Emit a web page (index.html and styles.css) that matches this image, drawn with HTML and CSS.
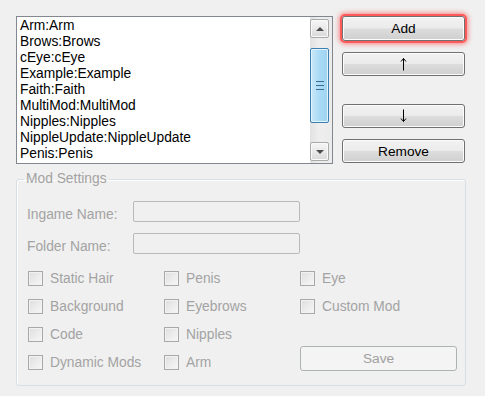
FILE: index.html
```html
<!DOCTYPE html>
<html lang="en">
<head>
  <meta charset="UTF-8" />
  <title>Mod Manager</title>
  <link rel="stylesheet" href="styles.css">
</head>
<body>

<div class="window">
  <div class="top">
    <div class="listbox">
      <ul class="items">
        <li>Arm:Arm</li>
        <li>Brows:Brows</li>
        <li>cEye:cEye</li>
        <li>Example:Example</li>
        <li>Faith:Faith</li>
        <li>MultiMod:MultiMod</li>
        <li>Nipples:Nipples</li>
        <li>NippleUpdate:NippleUpdate</li>
        <li>Penis:Penis</li>
      </ul>
      <div class="scrollbar">
        <div class="sb-btn"><span class="tri up"></span></div>
        <div class="sb-track">
          <div class="thumb"><span class="grip"></span></div>
        </div>
        <div class="sb-btn"><span class="tri down"></span></div>
      </div>
    </div>

    <div class="actions">
      <button class="btn focused">Add</button>
      <button class="btn arrow" title="Move up">
        <svg width="7" height="14" viewBox="0 0 7 14"><path d="M3.5 1.5V13.5M1 4.5L3.5 1.5L6 4.5" fill="none" stroke="#000" stroke-width="1"/></svg>
      </button>
      <button class="btn arrow down-btn" title="Move down">
        <svg width="7" height="14" viewBox="0 0 7 14"><path d="M3.5 0.5V12.5M1 9.5L3.5 12.5L6 9.5" fill="none" stroke="#000" stroke-width="1"/></svg>
      </button>
      <button class="btn remove">Remove</button>
    </div>
  </div>

  <fieldset class="group">
    <legend>Mod Settings</legend>

    <div class="field">
      <label>Ingame Name:</label>
      <div class="textbox"></div>
    </div>
    <div class="field">
      <label>Folder Name:</label>
      <div class="textbox"></div>
    </div>

    <div class="checks">
      <div class="check"><span class="box"></span>Static Hair</div>
      <div class="check"><span class="box"></span>Penis</div>
      <div class="check"><span class="box"></span>Eye</div>
      <div class="check"><span class="box"></span>Background</div>
      <div class="check"><span class="box"></span>Eyebrows</div>
      <div class="check"><span class="box"></span>Custom Mod</div>
      <div class="check"><span class="box"></span>Code</div>
      <div class="check"><span class="box"></span>Nipples</div>
      <div class="empty"></div>
      <div class="check"><span class="box"></span>Dynamic Mods</div>
      <div class="check"><span class="box"></span>Arm</div>
      <button class="btn save" disabled>Save</button>
    </div>
  </fieldset>
</div>

</body>
</html>
```

FILE: styles.css
```css
* {
  margin: 0;
  padding: 0;
  box-sizing: border-box;
}

body {
  background: #f0f0f0;
  font-family: 'Liberation Sans', Arial, sans-serif;
  width: 485px;
  height: 396px;
  overflow: hidden;
}

.window {
  padding: 16px 19px 0 16px;
}

.top {
  display: flex;
  gap: 9px;
}

/* list box */
.listbox {
  width: 317px;
  height: 148px;
  border: 1px solid #828790;
  background: #fff;
  display: flex;
}

.items {
  flex: 1;
  list-style: none;
  padding: 1px 0 0 3px;
  font-size: 13.8px;
  line-height: 16px;
  color: #000;
}

.scrollbar {
  width: 22px;
  padding: 2px 2px 2px 0;
  display: flex;
  flex-direction: column;
  background: linear-gradient(to right, #e2e2e2, #eeeeee 40%, #ebebeb);
}

.sb-btn {
  height: 19px;
  width: 19px;
  border: 1px solid #a9a9a9;
  border-radius: 2px;
  background: linear-gradient(to bottom, #f6f6f6, #e9e9e9 50%, #d9d9d9);
  box-shadow: inset 0 0 0 1px #fafafa;
  display: flex;
  align-items: center;
  justify-content: center;
}

.tri {
  width: 0;
  height: 0;
  border-left: 4px solid transparent;
  border-right: 4px solid transparent;
}

.tri.up { border-bottom: 4px solid #4d4d4d; }
.tri.down { border-top: 4px solid #4d4d4d; }

.sb-track {
  flex: 1;
  padding-top: 10px;
}

.thumb {
  width: 19px;
  height: 75px;
  border: 1px solid #3c7fb1;
  border-radius: 2px;
  background: linear-gradient(to right, #cbe8f8, #a9dbf6 50%, #9fd3f1);
  box-shadow: inset 0 0 0 1px #e3f4fc;
  display: flex;
  align-items: center;
  justify-content: center;
}

.grip {
  width: 8px;
  height: 9px;
  border-top: 1px solid #3b6d91;
  border-bottom: 1px solid #3b6d91;
  position: relative;
}

.grip::after {
  content: "";
  position: absolute;
  left: 0;
  right: 0;
  top: 3px;
  border-top: 1px solid #3b6d91;
}

/* buttons */
.actions {
  width: 123px;
  display: flex;
  flex-direction: column;
}

.btn {
  width: 123px;
  height: 24px;
  border: 1px solid #707070;
  border-radius: 3px;
  background: linear-gradient(to bottom, #f2f2f2, #ebebeb 49%, #dddddd 51%, #cfcfcf);
  box-shadow: inset 0 0 0 1px #fcfcfc;
  font-family: 'Liberation Sans', Arial, sans-serif;
  font-weight: normal;
  font-size: 13.7px;
  color: #000;
}

.btn.focused {
  height: 25px;
  box-shadow: inset 0 0 0 1px #fcfcfc, 0 0 0 2px #ff5a5a, 0 0 5px 3px rgba(255, 40, 40, 0.55);
}

.btn.arrow {
  margin-top: 11px;
  display: flex;
  align-items: center;
  justify-content: center;
}

.btn.down-btn {
  margin-top: 28px;
}

.btn.remove {
  margin-top: 11px;
}

/* group box */
.group {
  margin-top: 7px;
  width: 450px;
  height: 215px;
  border: 1px solid #d5dfe5;
  border-radius: 3px;
  box-shadow: inset 1px 1px 0 #fff;
  padding: 14px 0 0 10px;
  color: #a3a3a3;
  font-size: 13.8px;
}

.group legend {
  margin-left: -3px;
  padding: 0 2px;
  line-height: 16px;
  color: #a3a3a3;
}

.field {
  display: flex;
  align-items: center;
  height: 21px;
  margin-bottom: 11px;
}

.field label {
  width: 106px;
  padding-top: 6px;
}

.textbox {
  width: 167px;
  height: 21px;
  border: 1px solid #b9b9b9;
  border-radius: 2px;
  background: #f0f0f0;
}

.checks {
  display: grid;
  grid-template-columns: 136px 136px 157px;
  grid-auto-rows: 28px;
  margin-top: 17px;
  margin-left: 1px;
}

.check {
  display: flex;
  align-items: center;
  gap: 7px;
  height: 15px;
}

.box {
  width: 15px;
  height: 15px;
  border: 1px solid #a8a8a8;
  background: linear-gradient(135deg, #dedede, #f7f7f7);
  box-shadow: inset 0 0 0 1px #f2f2f2;
}

.btn.save {
  width: 157px;
  height: 25px;
  margin-top: -9px;
  border-color: #adb2b5;
  background: #f4f4f4;
  box-shadow: none;
  color: #a0a0a0;
}
```
